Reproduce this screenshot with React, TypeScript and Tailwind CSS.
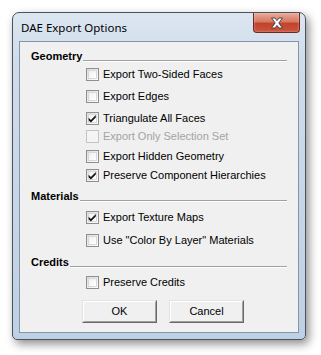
import React from "react";

const body = { fontFamily: '"Liberation Sans", Arial, sans-serif' };

function Check({ checked, disabled }: { checked?: boolean; disabled?: boolean }) {
  return (
    <div
      className={`w-[13px] h-[13px] border flex items-center justify-center shrink-0 ${
        disabled ? "border-[#c4c4c4] bg-[#f4f4f4]" : "border-[#8e8f8f] bg-[linear-gradient(135deg,#dcdcdc,#ffffff)]"
      }`}
    >
      <div className={`w-[9px] h-[9px] flex items-center justify-center ${disabled ? "" : "bg-[linear-gradient(135deg,#f0f0f0,#ffffff)] border border-[#d8d8d8]"}`}>
        {checked && (
          <svg width="9" height="9" viewBox="0 0 9 9" className="overflow-visible">
            <path d="M0.6 3.8 L2.9 6 L7.8 1 L7.8 3.6 L2.9 8.4 L0.6 6.2 Z" fill="#111" />
          </svg>
        )}
      </div>
    </div>
  );
}

function Row({ label, checked, disabled, mt }: { label: string; checked?: boolean; disabled?: boolean; mt: string }) {
  return (
    <div className={`h-[16px] flex items-center pl-[66px] ${mt}`}>
      <Check checked={checked} disabled={disabled} />
      <span className={`ml-[4px] text-[11px] leading-[16px] whitespace-nowrap ${disabled ? "text-[#a3a3a3]" : "text-black"}`} style={body}>
        {label}
      </span>
    </div>
  );
}

function Heading({ label, mt }: { label: string; mt: string }) {
  return (
    <div className={`h-[13px] flex items-end px-[11px] ${mt}`}>
      <span className="text-[11px] font-bold leading-[13px] text-black whitespace-nowrap" style={body}>
        {label}
      </span>
      <div className="flex-1 ml-[1px] mb-[1px] border-t border-[#a0a0a0] border-b border-b-white h-[2px]" />
    </div>
  );
}

function Button({ label }: { label: string }) {
  return (
    <div className="w-[75px] h-[23px] border border-t-[#e3e3e3] border-l-[#e3e3e3] border-r-[#696969] border-b-[#696969] bg-[#f0f0f0]">
      <div className="w-full h-full border border-t-white border-l-white border-r-[#a0a0a0] border-b-[#a0a0a0] flex items-center justify-center">
        <span className="text-[11px] text-black" style={body}>
          {label}
        </span>
      </div>
    </div>
  );
}

export default function App() {
  return (
    <div className="w-[321px] h-[355px] bg-white pt-[12px] pl-[12px] overflow-hidden">
      <div className="w-[294px] h-[328px] rounded-t-[7px] rounded-b-[5px] border border-[#4a525c] bg-[linear-gradient(180deg,#dbe6f1_0%,#cfdcea_15%,#bed0e3_100%)] shadow-[3px_4px_10px_rgba(0,0,0,0.45)] flex flex-col">
        <div className="h-[28px] flex items-start justify-between pl-[8px] pr-[5px]">
          <span className="mt-[8px] text-[11.5px] leading-[14px] text-black" style={{ fontFamily: '"Noto Sans", "Open Sans", sans-serif' }}>
            DAE Export Options
          </span>
          <div className="w-[47px] h-[20px] rounded-b-[4px] border border-t-0 border-[#6b2a20] bg-[linear-gradient(180deg,#e9a89a_0%,#d67a66_45%,#c5422b_55%,#c8553c_100%)] flex items-center justify-center shadow-[inset_0_0_2px_rgba(255,255,255,0.6)]">
            <svg width="14" height="12" viewBox="0 0 14 12">
              <path d="M1.5 1 L5 1 L7 3.6 L9 1 L12.5 1 L8.8 6 L12.5 11 L9 11 L7 8.4 L5 11 L1.5 11 L5.2 6 Z" fill="#ffffff" stroke="#3a3a3a" strokeWidth="0.9" strokeLinejoin="round" />
            </svg>
          </div>
        </div>
        <div className="mx-[6px] mb-[6px] flex-1 border border-[#8395a8] bg-[#f0f0f0] flex flex-col">
          <Heading label="Geometry" mt="mt-[8px]" />
          <Row label="Export Two-Sided Faces" mt="mt-[3px]" />
          <Row label="Export Edges" mt="mt-[6px]" />
          <Row label="Triangulate All Faces" checked mt="mt-[6px]" />
          <Row label="Export Only Selection Set" disabled mt="mt-[2px]" />
          <Row label="Export Hidden Geometry" mt="mt-[4px]" />
          <Row label="Preserve Component Hierarchies" checked mt="mt-[3px]" />
          <Heading label="Materials" mt="mt-[7px]" />
          <Row label="Export Texture Maps" checked mt="mt-[6px]" />
          <Row label={'Use "Color By Layer" Materials'} mt="mt-[7px]" />
          <Heading label="Credits" mt="mt-[8px]" />
          <Row label="Preserve Credits" mt="mt-[5px]" />
          <div className="mt-[10px] flex pl-[62px] gap-[12px]">
            <Button label="OK" />
            <Button label="Cancel" />
          </div>
        </div>
      </div>
    </div>
  );
}
